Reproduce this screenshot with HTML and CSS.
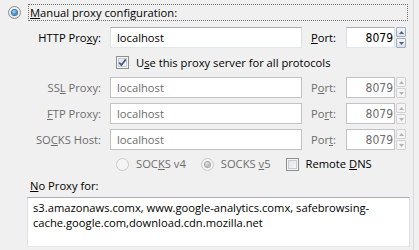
FILE: index.html
```html
<!DOCTYPE html>
<html lang="en">
<head>
    <meta charset="UTF-8">
    <title>Connection Settings</title>
    <link rel="stylesheet" href="styles.css">
</head>
<body>
    <div class="panel">
        <div class="manual-row">
            <span class="radio checked"></span>
            <span class="focus-label"><span><u>M</u>anual proxy configuration:</span></span>
        </div>

        <div class="proxy-grid">
            <span class="field-label">HTTP Pro<u>x</u>y:</span>
            <div class="textbox">localhost</div>
            <span class="port-label"><u>P</u>ort:</span>
            <div class="port">
                <div class="textbox num">8079</div>
                <div class="spin">
                    <span class="spin-btn"><svg width="5" height="3" viewBox="0 0 5 3"><path d="M2.5 0L5 3H0z"/></svg></span>
                    <span class="spin-btn"><svg width="5" height="3" viewBox="0 0 5 3"><path d="M0 0H5L2.5 3z"/></svg></span>
                </div>
            </div>

            <div class="share-row">
                <span class="checkbox checked">
                    <svg width="9" height="9" viewBox="0 0 9 9"><path d="M1.2 4.6L3.4 7L7.8 1.4" fill="none" stroke="#4b5e94" stroke-width="1.8"/></svg>
                </span>
                <span>U<u>s</u>e this proxy server for all protocols</span>
            </div>

            <span class="field-label disabled">SS<u>L</u> Proxy:</span>
            <div class="textbox disabled">localhost</div>
            <span class="port-label disabled">P<u>o</u>rt:</span>
            <div class="port disabled">
                <div class="textbox num disabled">8079</div>
                <div class="spin">
                    <span class="spin-btn"><svg width="5" height="3" viewBox="0 0 5 3"><path d="M2.5 0L5 3H0z"/></svg></span>
                    <span class="spin-btn"><svg width="5" height="3" viewBox="0 0 5 3"><path d="M0 0H5L2.5 3z"/></svg></span>
                </div>
            </div>

            <span class="field-label disabled"><u>F</u>TP Proxy:</span>
            <div class="textbox disabled">localhost</div>
            <span class="port-label disabled">Po<u>r</u>t:</span>
            <div class="port disabled">
                <div class="textbox num disabled">8079</div>
                <div class="spin">
                    <span class="spin-btn"><svg width="5" height="3" viewBox="0 0 5 3"><path d="M2.5 0L5 3H0z"/></svg></span>
                    <span class="spin-btn"><svg width="5" height="3" viewBox="0 0 5 3"><path d="M0 0H5L2.5 3z"/></svg></span>
                </div>
            </div>

            <span class="field-label disabled">SO<u>C</u>KS Host:</span>
            <div class="textbox disabled">localhost</div>
            <span class="port-label disabled">Por<u>t</u>:</span>
            <div class="port disabled">
                <div class="textbox num disabled">8079</div>
                <div class="spin">
                    <span class="spin-btn"><svg width="5" height="3" viewBox="0 0 5 3"><path d="M2.5 0L5 3H0z"/></svg></span>
                    <span class="spin-btn"><svg width="5" height="3" viewBox="0 0 5 3"><path d="M0 0H5L2.5 3z"/></svg></span>
                </div>
            </div>

            <div class="socks-row">
                <span class="option disabled"><span class="radio disabled"></span><span>SOC<u>K</u>S v4</span></span>
                <span class="option disabled"><span class="radio checked disabled"></span><span>SOCKS <u>v</u>5</span></span>
                <span class="option"><span class="checkbox"></span><span>Remote <u>D</u>NS</span></span>
            </div>
        </div>

        <div class="noproxy-label"><u>N</u>o Proxy for:</div>
        <div class="textarea">s3.amazonaws.comx, www.google-analytics.comx, safebrowsing-cache.google.com,download.cdn.mozilla.net</div>
    </div>
</body>
</html>
```

FILE: styles.css
```css
:root {
    --bg: #f0f0f0;
    --text: #000000;
    --text-disabled: #6d6d6d;
    --box-top: #abadb3;
    --box-side: #dbdfe6;
    --box-bottom: #e3e9ef;
    --box-disabled: #c2c2c2;
    --edge: #d9d9d9;
}

* {
    margin: 0;
    padding: 0;
    box-sizing: border-box;
}

body {
    font-family: 'Open Sans', sans-serif;
    font-size: 11.2px;
    line-height: 14px;
    color: var(--text);
    background: var(--bg);
}

u {
    text-decoration: underline;
    text-underline-offset: 1px;
}

.panel {
    width: 414px;
    height: 250px;
    border-right: 1px solid var(--edge);
    padding-top: 4px;
}

.manual-row {
    display: flex;
    align-items: center;
    height: 17px;
    padding-left: 8px;
    gap: 7px;
}

.focus-label {
    flex: 1;
    height: 17px;
    margin-right: 5px;
    padding-left: 1px;
    border: 1px dotted #6e6e6e;
    display: flex;
    align-items: center;
}

/* radio buttons */
.radio {
    width: 13px;
    height: 13px;
    border-radius: 50%;
    border: 1px solid #8e8f8f;
    background: radial-gradient(circle at 50% 35%, #ffffff 0%, #e6e6e6 70%, #d2d2d2 100%);
    display: inline-flex;
    align-items: center;
    justify-content: center;
    flex-shrink: 0;
}

.radio.checked::after {
    content: '';
    width: 5px;
    height: 5px;
    border-radius: 50%;
    background: radial-gradient(circle at 40% 35%, #a6e0fb 0%, #3a8ed4 55%, #1b5b9e 100%);
    box-shadow: 0 0 0 1px #3f6f9f;
}

.radio.disabled {
    border-color: #c9c9c9;
    background: #f4f4f4;
}

.radio.checked.disabled::after {
    background: radial-gradient(circle at 40% 35%, #e2e2e2 0%, #b0b0b0 70%, #9a9a9a 100%);
    box-shadow: 0 0 0 1px #a9a9a9;
}

/* checkboxes */
.checkbox {
    width: 13px;
    height: 13px;
    border: 1px solid #8e8f8f;
    background: linear-gradient(135deg, #dcdcdc, #ffffff);
    box-shadow: inset 0 0 0 1px #f4f4f4, inset 0 0 0 2px #c6cdd8;
    display: inline-flex;
    align-items: center;
    justify-content: center;
    flex-shrink: 0;
}

/* field grid */
.proxy-grid {
    margin-top: 6px;
    display: grid;
    grid-template-columns: 101px 192px 26px 61px;
    grid-template-rows: 21px 19px 21px 21px 21px 18px;
    column-gap: 9px;
    row-gap: 5px;
    align-items: center;
}

.field-label {
    text-align: right;
}

.disabled {
    color: var(--text-disabled);
}

.textbox {
    height: 21px;
    display: flex;
    align-items: center;
    padding-left: 6px;
    background: #ffffff;
    border: 1px solid var(--box-side);
    border-top-color: var(--box-top);
    border-bottom-color: var(--box-bottom);
}

.textbox.disabled {
    border-color: var(--box-disabled);
}

.port {
    display: flex;
    height: 21px;
    gap: 1px;
}

.textbox.num {
    width: 49px;
    justify-content: flex-end;
    padding-left: 0;
    padding-right: 1px;
    font-family: 'Liberation Sans Narrow', 'DejaVu Sans Condensed', sans-serif;
    font-size: 12px;
    color: var(--text);
}

.textbox.num.disabled {
    color: var(--text-disabled);
}

.spin {
    width: 10px;
    display: flex;
    flex-direction: column;
    gap: 1px;
}

.spin-btn {
    flex: 1;
    display: flex;
    align-items: center;
    justify-content: center;
    border: 1px solid #a5acb5;
    border-radius: 1px;
    background: linear-gradient(#f4f7fb, #dae1ea);
    fill: #4d6185;
}

.port.disabled .spin-btn {
    border-color: #d2d2d2;
    background: #f4f4f4;
    fill: #b3b3b3;
}

.share-row {
    grid-column: 2 / -1;
    display: flex;
    align-items: center;
    gap: 7px;
    padding-left: 6px;
}

.socks-row {
    grid-column: 2 / -1;
    display: flex;
    align-items: center;
    padding-left: 6px;
    gap: 15px;
}

.option {
    display: inline-flex;
    align-items: center;
    gap: 7px;
}

.noproxy-label {
    margin-top: 6px;
    padding-left: 30px;
    height: 14px;
}

.textarea {
    margin: 4px 3px 0 27px;
    height: 50px;
    padding: 2px 5px;
    line-height: 15px;
    background: #ffffff;
    border: 1px solid var(--box-side);
    border-top-color: var(--box-top);
    border-bottom-color: var(--box-bottom);
}
```
